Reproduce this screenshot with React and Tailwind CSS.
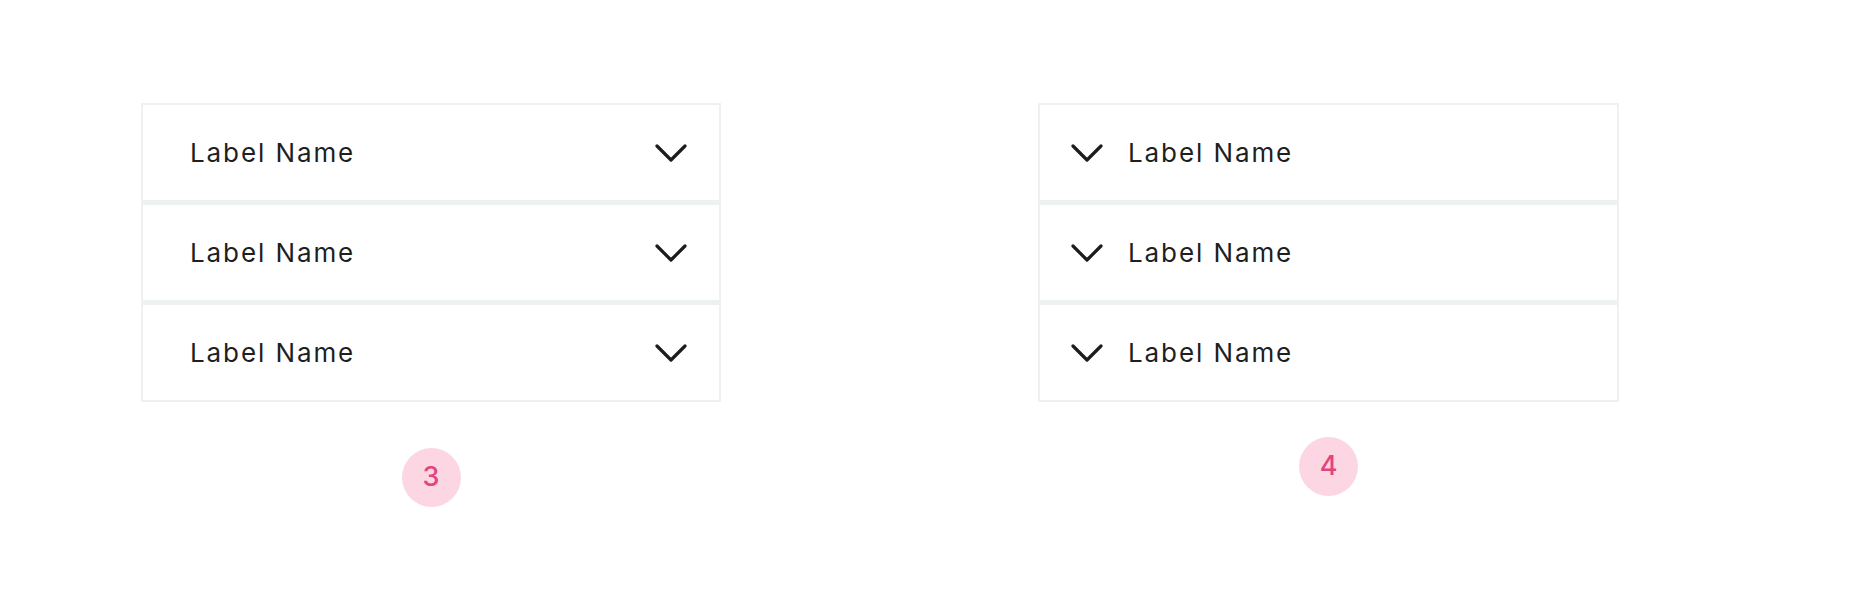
import React from "react";

const items = ["Label Name", "Label Name", "Label Name"];

function Chevron() {
  return (
    <svg width="32" height="18" viewBox="0 0 32 18" fill="none" className="shrink-0">
      <polyline
        points="2,2 16,16 30,2"
        stroke="#1c1c1c"
        strokeWidth="3.2"
        strokeLinecap="round"
        strokeLinejoin="round"
      />
    </svg>
  );
}

function Row({ label, iconLeft }) {
  return (
    <div className="h-[99px] border-2 border-[#edf1f2] bg-white flex items-center">
      {iconLeft ? (
        <div className="flex items-center pl-[31px] gap-[25px]">
          <Chevron />
          <span className="text-[26px] tracking-[1.9px] text-[#1f1f1f]">{label}</span>
        </div>
      ) : (
        <div className="flex items-center justify-between w-full pl-[47px] pr-[32px]">
          <span className="text-[26px] tracking-[1.9px] text-[#1f1f1f]">{label}</span>
          <Chevron />
        </div>
      )}
    </div>
  );
}

function Badge({ n }) {
  return (
    <div className="w-[59px] h-[59px] rounded-full bg-[#fcd6e3] flex items-center justify-center text-[27px] text-[#e2457d] font-medium">
      {n}
    </div>
  );
}

export default function App() {
  return (
    <div
      className="w-[1856px] h-[594px] bg-white flex pl-[141px] pt-[103px] gap-[317px]"
      style={{ fontFamily: "Inter, 'Noto Sans', sans-serif" }}
    >
      <div className="w-[580px] flex flex-col items-center">
        <div className="w-full flex flex-col gap-px bg-[#edf1f2]">
          {items.map((l, i) => (
            <Row key={i} label={l} />
          ))}
        </div>
        <div className="mt-[46px]">
          <Badge n="3" />
        </div>
      </div>
      <div className="w-[581px] flex flex-col items-center">
        <div className="w-full flex flex-col gap-px bg-[#edf1f2]">
          {items.map((l, i) => (
            <Row key={i} label={l} iconLeft />
          ))}
        </div>
        <div className="mt-[35px]">
          <Badge n="4" />
        </div>
      </div>
    </div>
  );
}
